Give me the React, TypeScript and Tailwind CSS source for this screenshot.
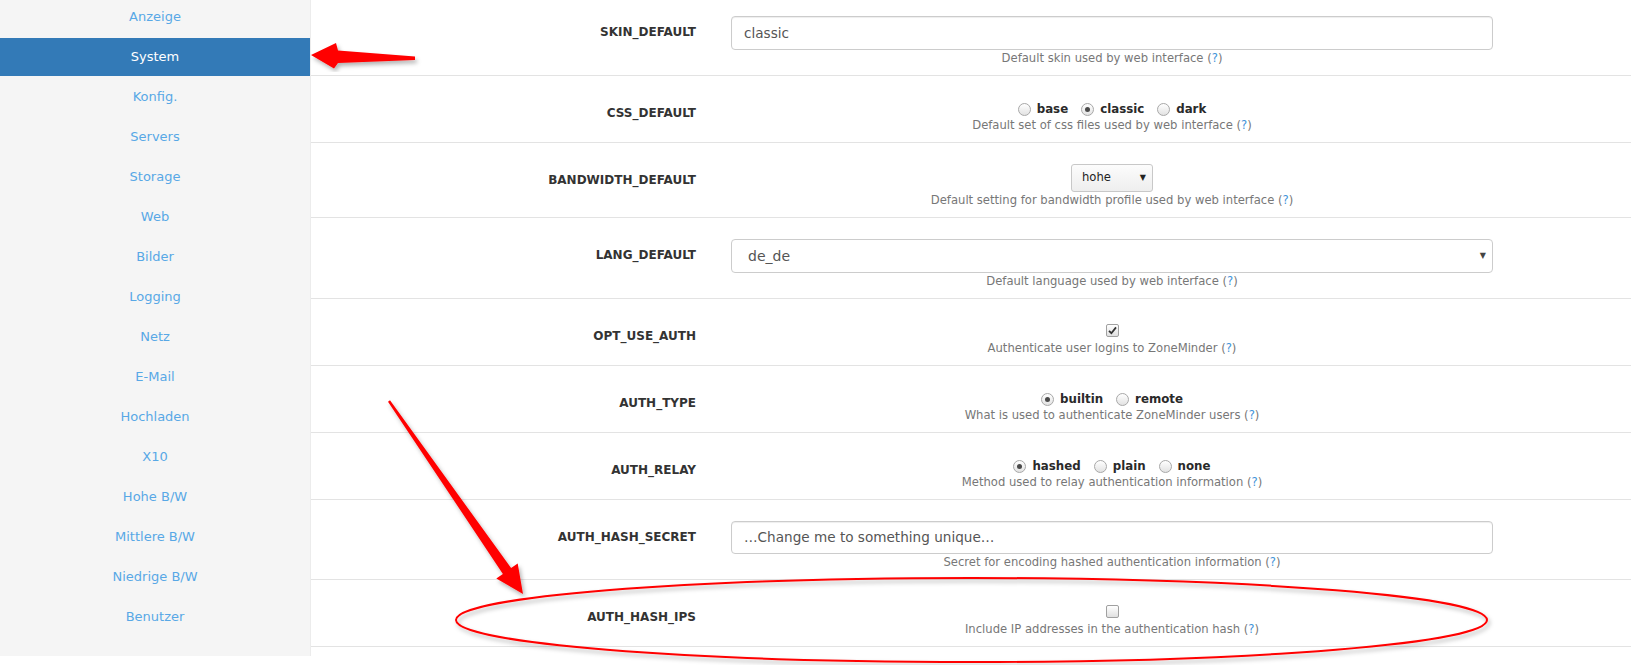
import React from 'react';

const menu = [
  'Anzeige', 'System', 'Konfig.', 'Servers', 'Storage', 'Web', 'Bilder', 'Logging',
  'Netz', 'E-Mail', 'Hochladen', 'X10', 'Hohe B/W', 'Mittlere B/W', 'Niedrige B/W', 'Benutzer',
];

type Option = { label: string; checked?: boolean };

type Row = {
  name: string;
  desc: string;
  kind: 'text' | 'radio' | 'smallselect' | 'select' | 'checkbox';
  value?: string;
  options?: Option[];
  checked?: boolean;
  height?: string;
};

const rows: Row[] = [
  { name: 'SKIN_DEFAULT', kind: 'text', value: 'classic', desc: 'Default skin used by web interface', height: 'h-[34px]' },
  {
    name: 'CSS_DEFAULT', kind: 'radio', desc: 'Default set of css files used by web interface',
    options: [{ label: 'base' }, { label: 'classic', checked: true }, { label: 'dark' }],
  },
  { name: 'BANDWIDTH_DEFAULT', kind: 'smallselect', value: 'hohe', desc: 'Default setting for bandwidth profile used by web interface' },
  { name: 'LANG_DEFAULT', kind: 'select', value: 'de_de', desc: 'Default language used by web interface' },
  { name: 'OPT_USE_AUTH', kind: 'checkbox', checked: true, desc: 'Authenticate user logins to ZoneMinder' },
  {
    name: 'AUTH_TYPE', kind: 'radio', desc: 'What is used to authenticate ZoneMinder users',
    options: [{ label: 'builtin', checked: true }, { label: 'remote' }],
  },
  {
    name: 'AUTH_RELAY', kind: 'radio', desc: 'Method used to relay authentication information',
    options: [{ label: 'hashed', checked: true }, { label: 'plain' }, { label: 'none' }],
  },
  { name: 'AUTH_HASH_SECRET', kind: 'text', value: '…Change me to something unique…', desc: 'Secret for encoding hashed authentication information', height: 'h-[33px]' },
  { name: 'AUTH_HASH_IPS', kind: 'checkbox', checked: false, desc: 'Include IP addresses in the authentication hash' },
];

const Radio = ({ label, checked }: Option) => (
  <span className="inline-flex items-center gap-[6px] leading-[14px]">
    <span className="w-[13px] h-[13px] rounded-full border border-[#a8a8a8] bg-linear-to-b from-white to-[#e2e2e2] flex items-center justify-center">
      {checked && <span className="w-[5px] h-[5px] rounded-full bg-[#4a4a4a]" />}
    </span>
    <span className="font-bold text-[11.8px] text-[#2a2a2a]">{label}</span>
  </span>
);

const Checkbox = ({ checked }: { checked?: boolean }) => (
  <span className="w-[13px] h-[13px] rounded-[2px] border border-[#a0a0a0] bg-linear-to-b from-white to-[#e0e0e0] flex items-center justify-center">
    {checked && (
      <svg width="9" height="9" viewBox="0 0 9 9">
        <path d="M1 4.8 L3.4 7.2 L8 1.4" fill="none" stroke="#333" strokeWidth="1.8" />
      </svg>
    )}
  </span>
);

const Control = ({ row }: { row: Row }) => {
  switch (row.kind) {
    case 'text':
      return (
        <div className={`${row.height} w-full border border-[#cccccc] rounded-[4px] flex items-center pl-[12px] text-[13.6px] text-[#555] shadow-[inset_0_1px_1px_rgba(0,0,0,0.07)]`}>
          {row.value}
        </div>
      );
    case 'radio':
      return (
        <div className="h-5 pt-[5px] flex items-start justify-center gap-[13px]">
          {row.options!.map((o) => (
            <Radio key={o.label} {...o} />
          ))}
        </div>
      );
    case 'smallselect':
      return (
        <div className="w-[82px] h-[28px] mx-auto border border-[#c8c8c8] rounded-[3px] bg-linear-to-b from-[#fcfcfc] to-[#eeeeee] flex items-center justify-between pl-[10px] pr-[6px] text-[11.6px] text-[#222]">
          <span>{row.value}</span>
          <span className="text-[8px] text-[#222]">▼</span>
        </div>
      );
    case 'select':
      return (
        <div className="h-[34px] w-full border border-[#cccccc] rounded-[4px] flex items-center justify-between pl-[16px] pr-[6px] text-[14px] text-[#555]">
          <span>{row.value}</span>
          <span className="text-[8px] text-[#444]">▼</span>
        </div>
      );
    case 'checkbox':
      return (
        <div className="h-5 flex items-center justify-center">
          <Checkbox checked={row.checked} />
        </div>
      );
  }
};

const Annotations = () => (
  <svg className="absolute inset-0 pointer-events-none" width="1631" height="665" viewBox="0 0 1631 665">
    <defs>
      <filter id="shadow" x="-10%" y="-10%" width="120%" height="120%">
        <feDropShadow dx="2" dy="3" stdDeviation="2" floodColor="#000" floodOpacity="0.3" />
      </filter>
    </defs>
    <polygon
      points="311,55 336,43 338,50.5 415,56.5 415,60 338,63 334,68.5"
      fill="#ff0000"
      filter="url(#shadow)"
    />
    <polygon
      points="390,400.3 511.1,568.1 517.7,563.6 523,594 496.3,578.4 502.9,573.9 388,401.7"
      fill="#ff0000"
      filter="url(#shadow)"
    />
    <ellipse cx="971.5" cy="620" rx="515.5" ry="42" fill="none" stroke="#ff0000" strokeWidth="2" filter="url(#shadow)" />
  </svg>
);

export default function App() {
  return (
    <div className="relative w-[1631px] h-[665px] overflow-hidden bg-white font-['DejaVu_Sans',sans-serif]">
      <div className="flex items-start">
        {/* Sidebar */}
        <nav className="w-[311px] shrink-0 bg-[#f5f5f5] -mt-[2px] pb-5 flex flex-col gap-[2px] border-r border-[#ececec]">
          {menu.map((item) => (
            <div
              key={item}
              className={`h-[38px] flex items-center justify-center text-[13px] ${
                item === 'System' ? 'bg-[#337ab7] text-white' : 'text-[#58a8e6]'
              }`}
            >
              {item}
            </div>
          ))}
        </nav>

        {/* Options table */}
        <div className="flex-1 -mt-[5px]">
          {rows.map((row) => (
            <div key={row.name} className="flex border-b border-[#e3e3e3] pt-[21px] pb-[8px]">
              <div className="w-[405px] shrink-0 pr-5 pt-[6px] text-right text-[12px] leading-5 font-bold text-[#333]">
                {row.name}
              </div>
              <div className="ml-[15px] w-[762px] shrink-0">
                <Control row={row} />
                <div className="text-center text-[11.6px] leading-[17px] text-[#777]">
                  {row.desc} (<span className="text-[#3f93d9]">?</span>)
                </div>
              </div>
            </div>
          ))}
        </div>
      </div>
      <Annotations />
    </div>
  );
}
